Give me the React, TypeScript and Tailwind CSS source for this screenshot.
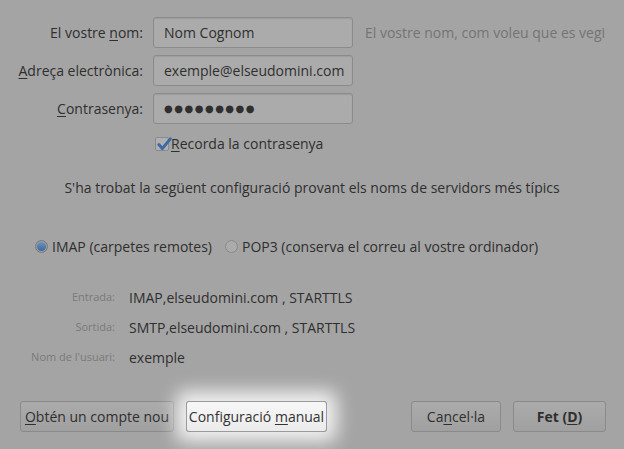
import React from "react";

function U({ children }: { children: React.ReactNode }) {
  return <span className="underline underline-offset-2 decoration-1">{children}</span>;
}

function Field({ label, value, password }: { label: React.ReactNode; value: string; password?: boolean }) {
  return (
    <div className="flex items-center">
      <div className="w-[143px] text-right text-[#2f2f2f]">{label}</div>
      <div className="ml-[10px] w-[200px] h-[31px] rounded-[3px] border border-[#8b8b8b] bg-[#ababab] flex items-center px-[10px] text-[#2f2f2f] shadow-[inset_0_1px_1px_rgba(0,0,0,0.08)]">
        {password ? <span className="tracking-[1.5px] text-[10px]">●●●●●●●●●</span> : value}
      </div>
    </div>
  );
}

function Btn({ children, className = "" }: { children: React.ReactNode; className?: string }) {
  return (
    <div
      className={`h-[31px] rounded-[3px] border border-[#8a8a8a] bg-gradient-to-b from-[#ababab] to-[#a0a0a0] flex items-center justify-center text-[#2f2f2f] ${className}`}
    >
      {children}
    </div>
  );
}

export default function App() {
  return (
    <div
      className="w-[624px] h-[449px] bg-[#a4a4a4] text-[14px] overflow-hidden flex flex-col"
      style={{ fontFamily: '"Open Sans", "DejaVu Sans", sans-serif' }}
    >
      <div className="pt-[17px] flex flex-col gap-[7px]">
        <div className="flex items-center">
          <Field label={<>El vostre <U>n</U>om:</>} value="Nom Cognom" />
          <span className="ml-[12px] text-[#747474] whitespace-nowrap">El vostre nom, com voleu que es vegi</span>
        </div>
        <Field label={<><U>A</U>dreça electrònica:</>} value="exemple@elseudomini.com" />
        <Field label={<><U>C</U>ontrasenya:</>} value="" password />
      </div>

      <div className="flex items-center mt-[9px] ml-[155px] text-[#2f2f2f]">
        <div className="w-[14px] h-[14px] rounded-[2px] border border-[#8a8a8a] bg-[#b0b0b0] relative">
          <svg viewBox="0 0 14 14" className="absolute -top-[2px] left-0 w-[16px] h-[16px]">
            <path d="M2.5 7.5 L5.5 11 L12.5 2.5" fill="none" stroke="#3b6aa5" strokeWidth="2.6" strokeLinecap="round" strokeLinejoin="round" />
          </svg>
        </div>
        <span className="ml-[2px]"><U>R</U>ecorda la contrasenya</span>
      </div>

      <div className="mt-[23px] text-center text-[#2f2f2f]">
        S'ha trobat la següent configuració provant els noms de servidors més típics
      </div>

      <div className="mt-[38px] ml-[35px] flex items-center text-[#2f2f2f]">
        <div className="w-[13px] h-[13px] rounded-full border border-[#7c7c7c] bg-[#9a9a9a] flex items-center justify-center">
          <div className="w-[9px] h-[9px] rounded-full bg-gradient-to-b from-[#6c93c4] to-[#3d67a0]" />
        </div>
        <span className="ml-[4px]">IMAP (carpetes remotes)</span>
        <div className="ml-[13px] w-[13px] h-[13px] rounded-full border border-[#8a8a8a] bg-[#ababab]" />
        <span className="ml-[4px]">POP3 (conserva el correu al vostre ordinador)</span>
      </div>

      <div className="mt-[31px] flex flex-col gap-[12px] text-[#2f2f2f]">
        {[
          ["Entrada:", "IMAP,elseudomini.com , STARTTLS"],
          ["Sortida:", "SMTP,elseudomini.com , STARTTLS"],
          ["Nom de l'usuari:", "exemple"],
        ].map(([k, v]) => (
          <div key={k} className="flex items-center h-[18px]">
            <div className="w-[115px] text-right text-[11px] text-[#7a7a7a]">{k}</div>
            <div className="ml-[14px]">{v}</div>
          </div>
        ))}
      </div>

      <div className="mt-[35px] pl-[20px] pr-[18px] flex items-center">
        <Btn className="w-[154px]"><span><U>O</U>btén un compte nou</span></Btn>
        <div className="ml-[12px] w-[141px] h-[31px] rounded-[3px] border border-[#9a9a9a] bg-gradient-to-b from-[#f7f7f7] to-[#ebebeb] flex items-center justify-center text-[#333] shadow-[0_0_18px_10px_rgba(255,255,255,0.85)]">
          <span>Configuració <U>m</U>anual</span>
        </div>
        <div className="flex-1" />
        <Btn className="w-[90px]"><span>Ca<U>n</U>cel·la</span></Btn>
        <Btn className="ml-[12px] w-[93px] font-bold"><span>Fet (<U>D</U>)</span></Btn>
      </div>
    </div>
  );
}
